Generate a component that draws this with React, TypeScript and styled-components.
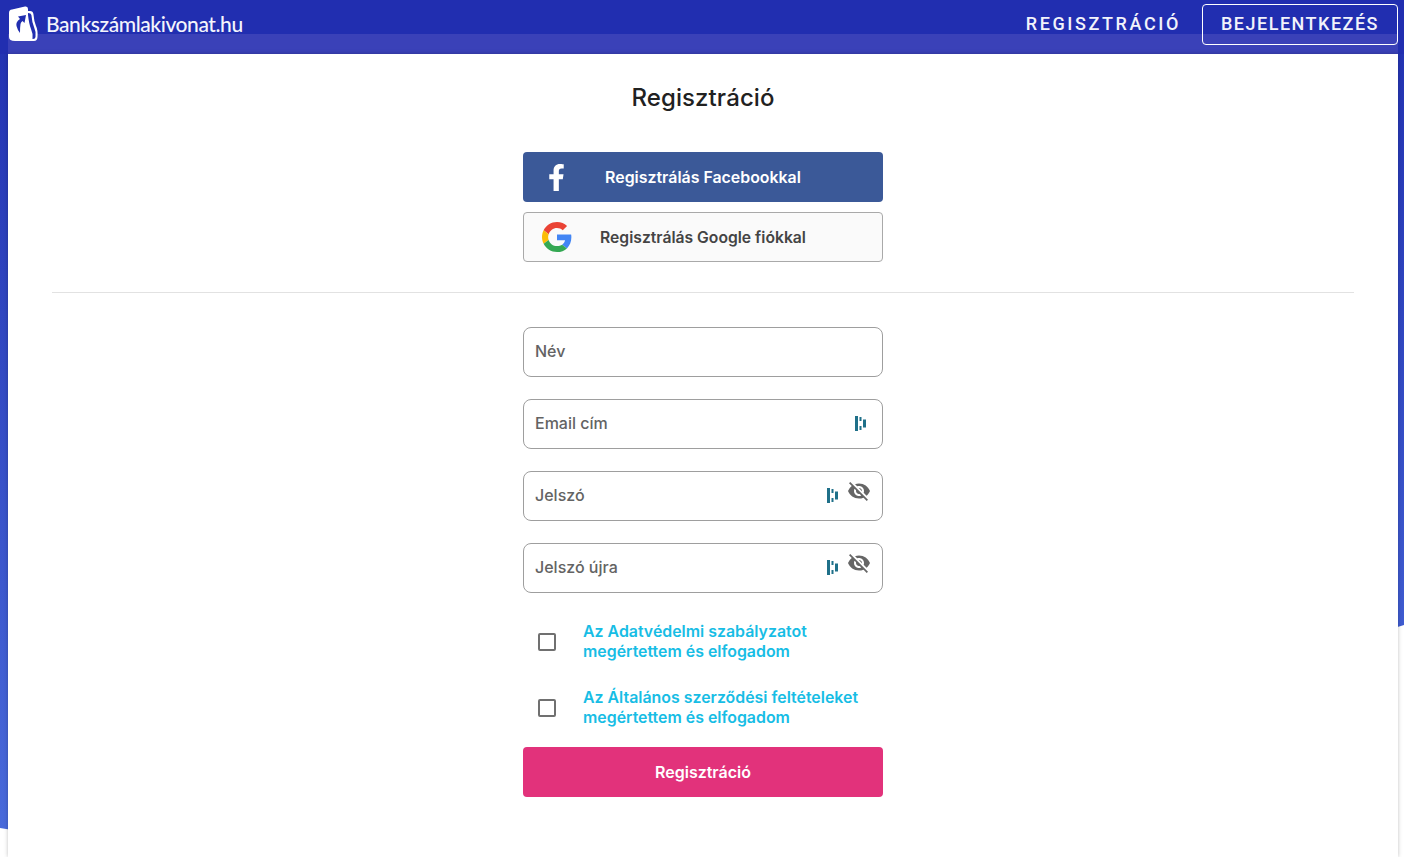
import React from 'react';
import styled, { createGlobalStyle } from 'styled-components';
import { FaFacebookF } from 'react-icons/fa';
import { MdVisibilityOff } from 'react-icons/md';

const GlobalStyle = createGlobalStyle`
  html, body {
    margin: 0;
    height: 100%;
    overflow: hidden;
    background: #fff;
  }
  * {
    box-sizing: border-box;
  }
`;

const Page = styled.div`
  position: relative;
  height: 857px;
  padding: 0 6px 0 8px;
  overflow: hidden;
  background: linear-gradient(180deg, #2130b0 0%, #4a6cdc 100%);
`;

const Wave = styled.svg`
  position: absolute;
  left: 0;
  top: 0;
  width: 1404px;
  height: 857px;
`;

const Header = styled.header`
  position: relative;
  display: flex;
  align-items: flex-start;
  justify-content: space-between;
  height: 54px;
  margin: 0 -6px 0 -8px;
  padding: 4px 6px 0 8px;
  background: #212eb0;
  color: #fff;
  &::after {
    content: '';
    position: absolute;
    left: 8px;
    right: 6px;
    bottom: 0;
    height: 20px;
    background: #3a41b8;
  }
`;

const Brand = styled.a`
  position: relative;
  z-index: 1;
  display: flex;
  align-items: center;
  gap: 8px;
  height: 40px;
  color: #f4f5fc;
  text-decoration: none;
  font-family: Lato, sans-serif;
  font-size: 21px;
  font-weight: 500;
  letter-spacing: -0.42px;
`;

const BrandName = styled.span`
  margin-bottom: 2px;
`;

const Nav = styled.nav`
  position: relative;
  z-index: 1;
  display: flex;
  align-items: center;
  gap: 21px;
  height: 41px;
`;

const NavLink = styled.a<{ $outlined?: boolean }>`
  display: flex;
  align-items: center;
  height: 41px;
  padding: 0 ${(p) => (p.$outlined ? '18px' : '0')} 2px;
  border: ${(p) => (p.$outlined ? '1px solid #fff' : 'none')};
  border-radius: 4px;
  color: #f2f3fb;
  font-family: Roboto, sans-serif;
  font-size: 18px;
  font-weight: 500;
  letter-spacing: ${(p) => (p.$outlined ? '1.5px' : '2.6px')};
`;

const Card = styled.main`
  position: relative;
  height: 803px;
  padding: 30px 44px 0;
  background: #fff;
  box-shadow: 0 0 4px rgba(0, 0, 0, 0.25);
  font-family: Inter, sans-serif;
`;

const Title = styled.h1`
  margin: 0 0 40px;
  color: #212121;
  font-size: 24px;
  line-height: 28px;
  font-weight: 500;
  letter-spacing: 0.1px;
  text-align: center;
`;

const Column = styled.div`
  display: flex;
  flex-direction: column;
  width: 360px;
  margin: 0 auto;
`;

const SocialButton = styled.button<{ $google?: boolean }>`
  position: relative;
  display: flex;
  align-items: center;
  justify-content: center;
  width: 100%;
  height: 50px;
  border: ${(p) => (p.$google ? '1px solid #a9a9a9' : 'none')};
  border-radius: 4px;
  background: ${(p) => (p.$google ? '#fafafa' : '#3b5998')};
  color: ${(p) => (p.$google ? '#444' : '#fff')};
  font-family: inherit;
  font-size: ${(p) => (p.$google ? '15.7px' : '15.9px')};
  font-weight: 600;
  & + & {
    margin-top: 10px;
  }
`;

const SocialIcon = styled.span`
  position: absolute;
  left: 18px;
  top: 0;
  bottom: 0;
  display: flex;
  align-items: center;
  justify-content: center;
  width: 30px;
`;

const Divider = styled.hr`
  height: 1px;
  margin: 30px 0 34px;
  border: 0;
  background: #e2e2e2;
`;

const Field = styled.div`
  position: relative;
  height: 50px;
  margin-bottom: 22px;
`;

const Input = styled.input`
  width: 100%;
  height: 100%;
  padding: 0 11px 2px;
  border: 1px solid #9e9e9e;
  border-radius: 8px;
  background: #fff;
  font-family: inherit;
  font-size: 16px;
  font-weight: 500;
  &::placeholder {
    color: #636363;
    opacity: 1;
  }
`;

const ManagerIcon = styled.svg<{ $shifted?: boolean }>`
  position: absolute;
  top: 17px;
  right: ${(p) => (p.$shifted ? '45px' : '17px')};
`;

const EyeIcon = styled.span`
  position: absolute;
  top: 8px;
  right: 12px;
  display: flex;
  color: #666;
`;

const Consent = styled.label`
  display: flex;
  align-items: center;
  height: 66px;
  padding-left: 15px;
  color: #17bde5;
  font-size: 15.9px;
  line-height: 20px;
  font-weight: 600;
`;

const Checkbox = styled.input`
  appearance: none;
  flex: none;
  width: 18px;
  height: 18px;
  margin: 0 27px 0 0;
  border: 2px solid #707070;
  border-radius: 2px;
  background: #fff;
`;

const ConsentList = styled.div`
  margin-top: -6px;
`;

const Submit = styled.button`
  width: 100%;
  height: 50px;
  margin-top: 6px;
  border: none;
  border-radius: 4px;
  background: #e2327b;
  color: #fff;
  font-family: inherit;
  font-size: 16px;
  font-weight: 600;
`;

const Logo = () => (
  <svg width="30" height="36" viewBox="1 0 30 36" aria-hidden="true">
    <path
      d="M2 7 Q2 4 5 3.600 L18 0.600 Q21 0 21 3 L21 5 L23 5 Q26 5 26.400 8 Q27 15 29 20 Q31 24 30.500 31 Q30.300 35 27 35 L8 35 Q2 35 2 31 Z"
      fill="#fff"
    />
    <path d="M21 5 L21 7 Q24 7 24.400 9 Q25 16 27 21 Q29 25 28.500 31 Q28.300 33 26 33 L22 33 L21 31 Z" fill="#212eb0" />
    <path d="M21 31 L21 9 Q22 18 24 23 Q26 27 25.500 33 L21 33 Z" fill="#fff" />
    <path
      d="M19 9 L11 10.500 L13 13 Q8.500 16 9.500 20 Q10.500 24 13 27 Q13 21 13.500 18 Q14 16 15.500 15 L17.500 17 Z"
      fill="#212eb0"
    />
  </svg>
);

const GoogleLogo = () => (
  <svg width="30" height="30" viewBox="0 0 48 48" aria-hidden="true">
    <path fill="#ea4335" d="M24 9.500c3.500 0 6.700 1.200 9.200 3.600l6.900-6.900C35.900 2.400 30.500 0 24 0 14.600 0 6.500 5.400 2.600 13.200l8 6.200C12.500 13.600 17.800 9.500 24 9.500z" />
    <path fill="#4285f4" d="M47 24.500c0-1.600-.1-3.100-.4-4.500H24v9h12.900c-.6 3-2.200 5.500-4.700 7.200l7.700 6C44.400 37.900 47 31.800 47 24.500z" />
    <path fill="#fbbc05" d="M10.600 28.600c-.5-1.400-.8-3-.8-4.600s.3-3.200.8-4.600l-8-6.200C.9 16.500 0 20.100 0 24s.9 7.500 2.600 10.800l8-6.200z" />
    <path fill="#34a853" d="M24 48c6.500 0 11.900-2.100 15.900-5.800l-7.700-6c-2.200 1.500-4.900 2.300-8.200 2.300-6.200 0-11.500-4.100-13.400-9.900l-8 6.200C6.500 42.600 14.600 48 24 48z" />
  </svg>
);

const Manager = ({ shifted }: { shifted?: boolean }) => (
  <ManagerIcon $shifted={shifted} width="11" height="15" viewBox="0 0 11 15" aria-hidden="true">
    <rect x="0" y="0" width="3" height="15" fill="#1f7089" />
    <rect x="4.500" y="1" width="2" height="4" fill="#1f7089" />
    <rect x="4.500" y="10" width="2" height="4" fill="#1f7089" />
    <rect x="8" y="3.500" width="3" height="8" fill="#1f7089" />
  </ManagerIcon>
);

const Eye = () => (
  <EyeIcon>
    <MdVisibilityOff size={24} />
  </EyeIcon>
);

export default function App() {
  return (
    <>
      <GlobalStyle />
      <Page>
        <Wave viewBox="0 0 1404 857" aria-hidden="true">
          <path d="M0 828 C300 880 1100 720 1404 625 L1404 857 L0 857 Z" fill="#fff" />
        </Wave>
        <Header>
          <Brand>
            <Logo />
            <BrandName>Bankszámlakivonat.hu</BrandName>
          </Brand>
          <Nav>
            <NavLink>REGISZTRÁCIÓ</NavLink>
            <NavLink $outlined>BEJELENTKEZÉS</NavLink>
          </Nav>
        </Header>
        <Card>
          <Title>Regisztráció</Title>
          <Column>
            <SocialButton>
              <SocialIcon>
                <FaFacebookF size={27} color="#fff" />
              </SocialIcon>
              Regisztrálás Facebookkal
            </SocialButton>
            <SocialButton $google>
              <SocialIcon>
                <GoogleLogo />
              </SocialIcon>
              Regisztrálás Google fiókkal
            </SocialButton>
          </Column>
          <Divider />
          <Column>
            <Field>
              <Input placeholder="Név" />
            </Field>
            <Field>
              <Input placeholder="Email cím" />
              <Manager />
            </Field>
            <Field>
              <Input placeholder="Jelszó" />
              <Manager shifted />
              <Eye />
            </Field>
            <Field>
              <Input placeholder="Jelszó újra" />
              <Manager shifted />
              <Eye />
            </Field>
            <ConsentList>
              <Consent>
                <Checkbox type="checkbox" />
                <span>
                  Az Adatvédelmi szabályzatot
                  <br />
                  megértettem és elfogadom
                </span>
              </Consent>
              <Consent>
                <Checkbox type="checkbox" />
                <span>
                  Az Általános szerződési feltételeket
                  <br />
                  megértettem és elfogadom
                </span>
              </Consent>
            </ConsentList>
            <Submit>Regisztráció</Submit>
          </Column>
        </Card>
      </Page>
    </>
  );
}
